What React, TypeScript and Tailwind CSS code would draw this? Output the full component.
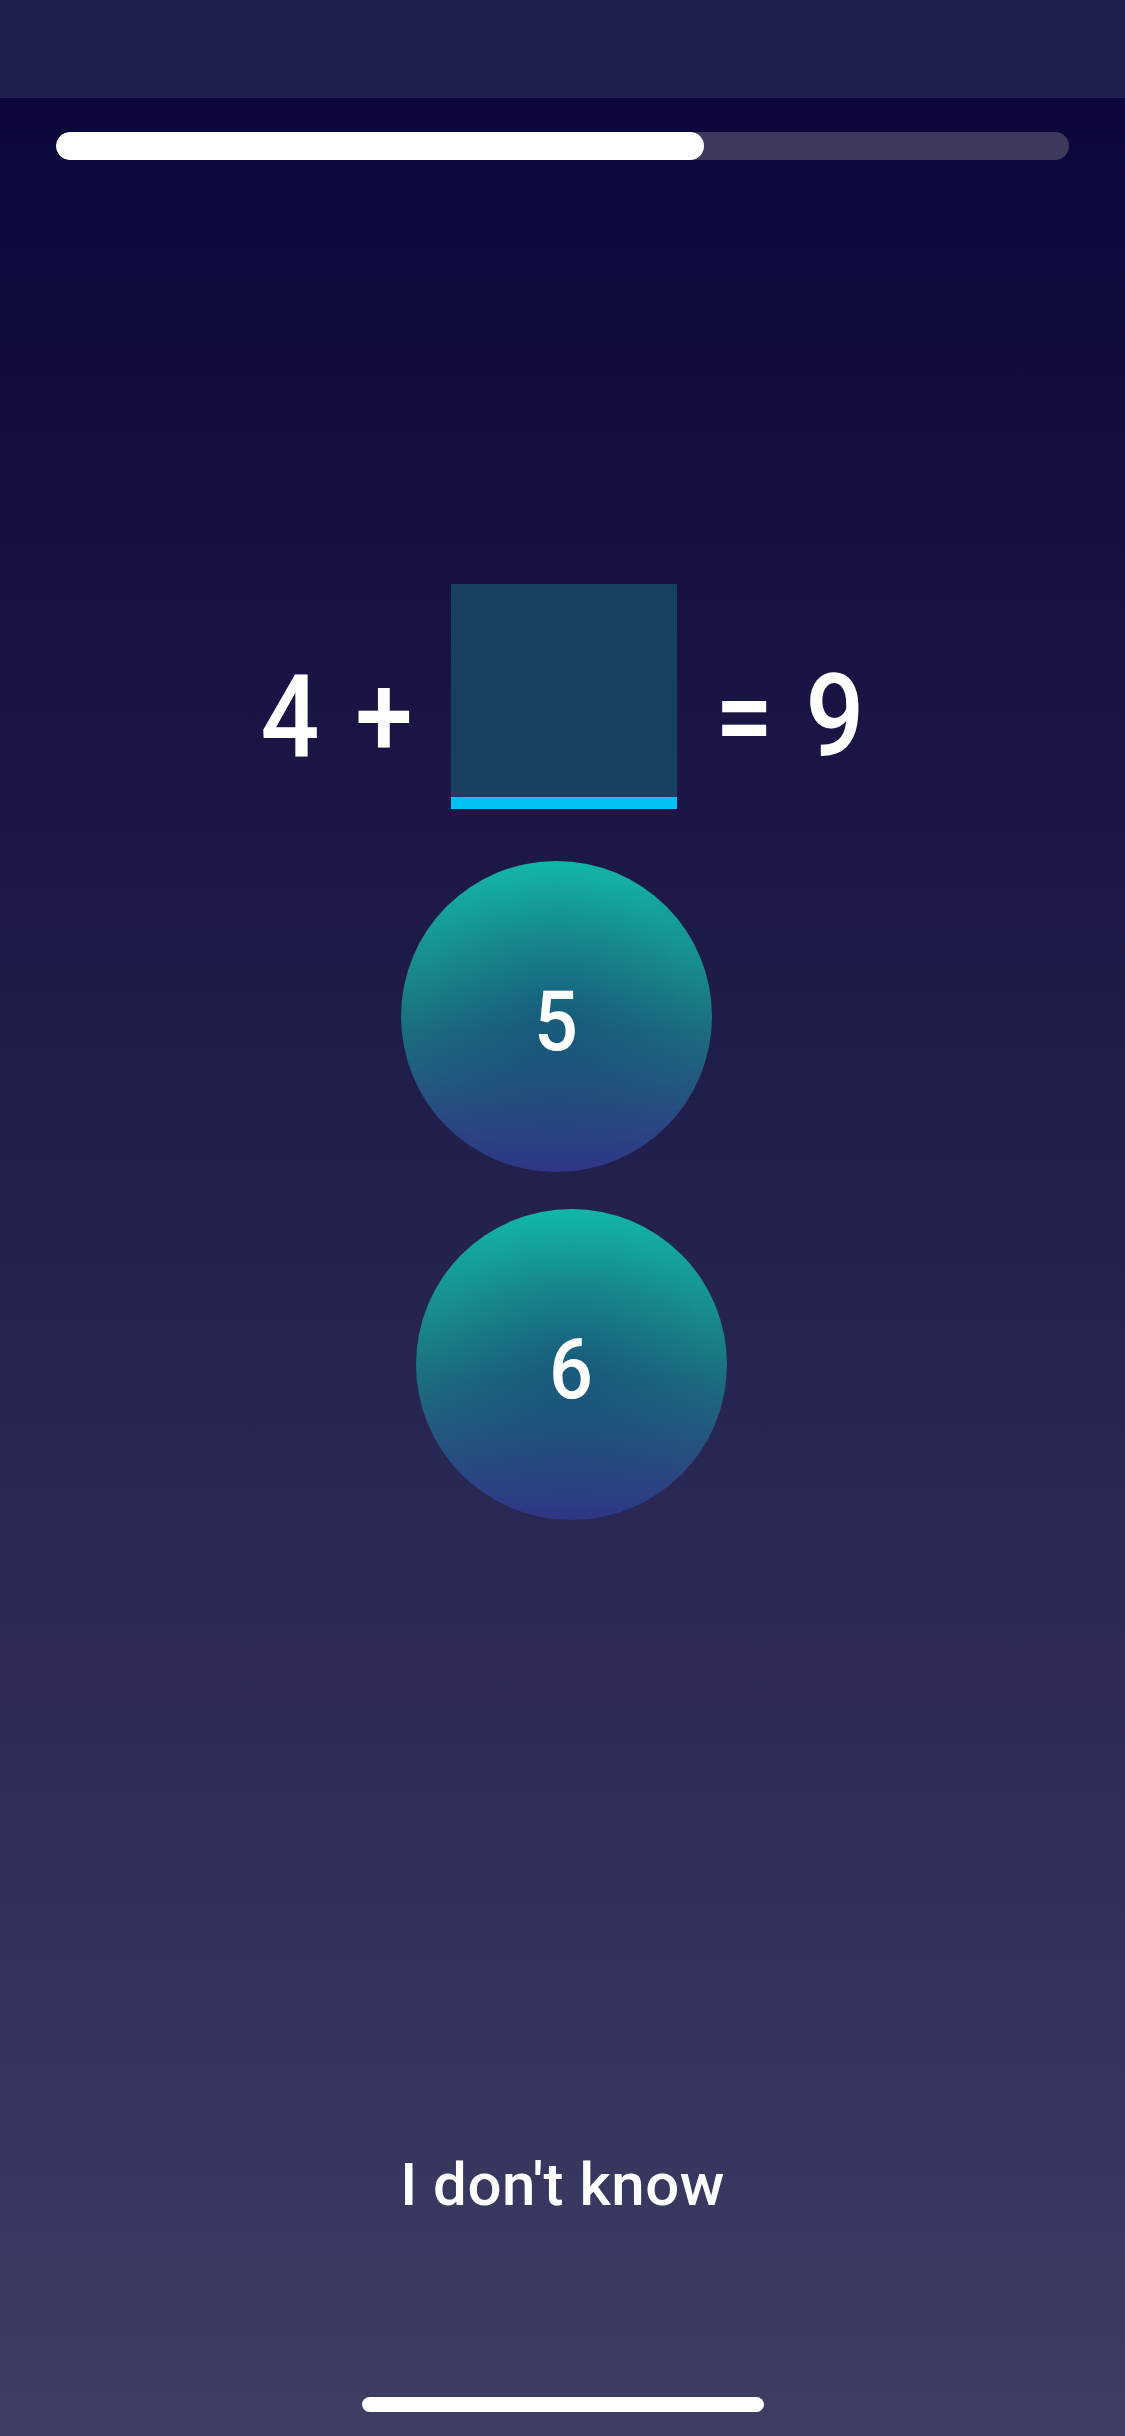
import React from "react";

const font = { fontFamily: "Roboto, 'Noto Sans', 'Liberation Sans', sans-serif" };

function Bubble({ label, shift }: { label: string; shift: string }) {
  return (
    <div
      className={`w-[311px] h-[311px] rounded-full flex items-center justify-center pt-[10px] bg-[radial-gradient(ellipse_at_50%_50%,rgba(20,50,110,0.35)_0%,rgba(20,50,110,0)_65%),linear-gradient(180deg,#12b6a8_0%,#188a8c_35%,#1b6c80_55%,#26507f_78%,#2f3587_100%)] ${shift}`}
    >
      <span className="text-[84px] leading-none font-medium text-white scale-x-[0.92]">{label}</span>
    </div>
  );
}

export default function App() {
  const progress = 64;
  return (
    <div className="w-[1125px] h-[2436px] flex flex-col overflow-hidden" style={font}>
      <div className="h-[98px] bg-[#1e1e4e] shrink-0" />
      <div className="flex-1 flex flex-col bg-[linear-gradient(180deg,#0b073a_0%,#3e3d64_100%)]">
        <div className="mt-[34px] mx-[56px] h-[28px] rounded-full bg-[#3c3a5c] overflow-hidden">
          <div className="h-full rounded-full bg-white" style={{ width: `${progress}%` }} />
        </div>

        <div className="mt-[424px] flex flex-row items-start justify-center text-white">
          <span className="w-[80px] mt-[75px] text-center text-[115px] leading-none font-medium scale-x-[0.9]">4</span>
          <span className="w-[80px] ml-[14px] mt-[75px] text-center text-[115px] leading-none font-medium scale-x-[0.9]">+</span>
          <div className="ml-[27px] w-[226px] h-[225px] flex flex-col bg-[#173f60]">
            <div className="flex-1" />
            <div className="h-[12px] bg-[#00c2f5]" />
          </div>
          <span className="w-[80px] ml-[27px] mt-[75px] text-center text-[115px] leading-none font-medium scale-x-[0.9]">=</span>
          <span className="w-[80px] ml-[11px] mt-[75px] text-center text-[115px] leading-none font-medium scale-x-[0.9]">9</span>
        </div>

        <div className="flex flex-col items-center">
          <div className="mt-[52px]">
            <Bubble label="5" shift="ml-[-13px]" />
          </div>
          <div className="mt-[37px]">
            <Bubble label="6" shift="ml-[17px]" />
          </div>
        </div>

        <div className="flex-1" />

        <div className="h-[60px] flex justify-center">
          <span className="text-[60px] leading-none font-medium text-white tracking-[0.5px]">I don't know</span>
        </div>
        <div className="mt-[182px] mb-[24px] flex justify-center">
          <div className="w-[402px] h-[15px] rounded-full bg-white" />
        </div>
      </div>
    </div>
  );
}
